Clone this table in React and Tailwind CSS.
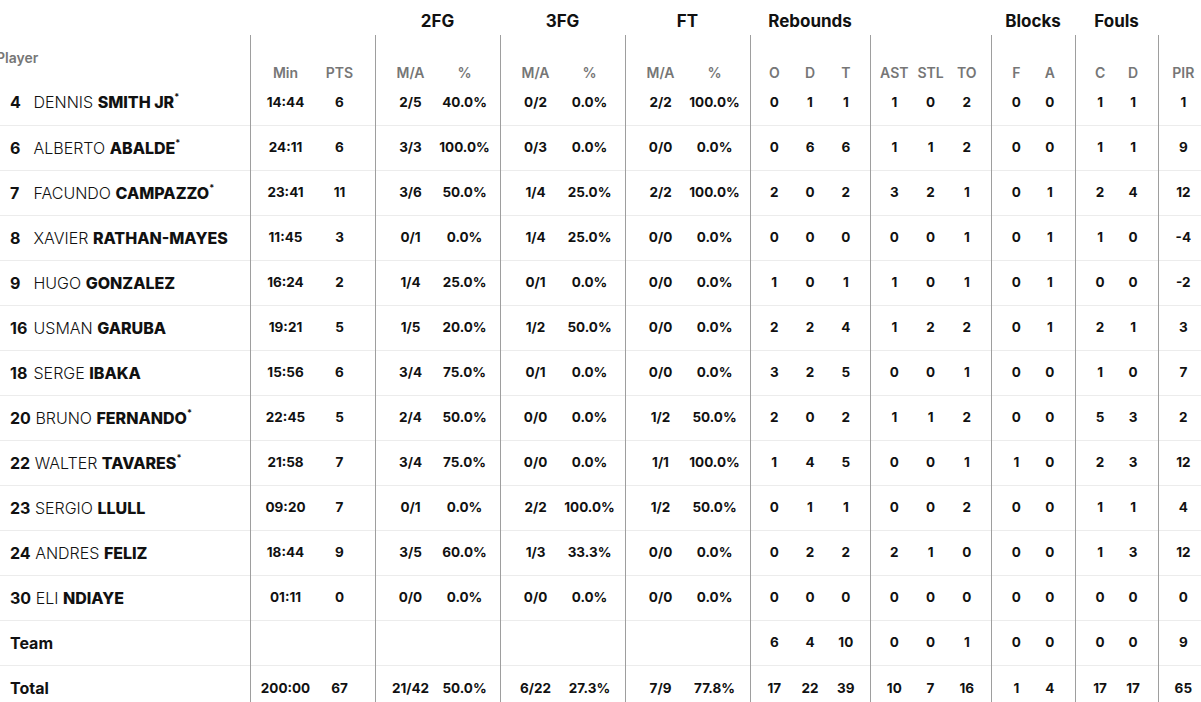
const cols = [
  { w: 'w-[62.5px]', pad: 'pl-2', line: true },
  { w: 'w-[62.5px]', pad: 'pr-2' },
  { w: 'w-[62.5px]', pad: 'pl-2', line: true },
  { w: 'w-[62.5px]', pad: 'pr-2' },
  { w: 'w-[62.5px]', pad: 'pl-2', line: true },
  { w: 'w-[62.5px]', pad: 'pr-2' },
  { w: 'w-[62.5px]', pad: 'pl-2', line: true },
  { w: 'w-[62.5px]', pad: 'pr-2' },
  { w: 'w-[40px]', pad: 'pl-2', line: true },
  { w: 'w-[40px]', pad: '' },
  { w: 'w-[40px]', pad: 'pr-2' },
  { w: 'w-[40px]', pad: 'pl-2', line: true },
  { w: 'w-[41px]', pad: '' },
  { w: 'w-[40px]', pad: 'pr-2' },
  { w: 'w-[42px]', pad: 'pl-2', line: true },
  { w: 'w-[42px]', pad: 'pr-2' },
  { w: 'w-[41.5px]', pad: 'pl-2', line: true },
  { w: 'w-[41.5px]', pad: 'pr-2' },
  { w: 'w-[50px]', pad: '', line: true },
];

const labels = ['Min', 'PTS', 'M/A', '%', 'M/A', '%', 'M/A', '%', 'O', 'D', 'T', 'AST', 'STL', 'TO', 'F', 'A', 'C', 'D', 'PIR'];

const players = [
  ['4', 'DENNIS', 'SMITH JR', true, '14:44 6 2/5 40.0% 0/2 0.0% 2/2 100.0% 0 1 1 1 0 2 0 0 1 1 1'],
  ['6', 'ALBERTO', 'ABALDE', true, '24:11 6 3/3 100.0% 0/3 0.0% 0/0 0.0% 0 6 6 1 1 2 0 0 1 1 9'],
  ['7', 'FACUNDO', 'CAMPAZZO', true, '23:41 11 3/6 50.0% 1/4 25.0% 2/2 100.0% 2 0 2 3 2 1 0 1 2 4 12'],
  ['8', 'XAVIER', 'RATHAN-MAYES', false, '11:45 3 0/1 0.0% 1/4 25.0% 0/0 0.0% 0 0 0 0 0 1 0 1 1 0 -4'],
  ['9', 'HUGO', 'GONZALEZ', false, '16:24 2 1/4 25.0% 0/1 0.0% 0/0 0.0% 1 0 1 1 0 1 0 1 0 0 -2'],
  ['16', 'USMAN', 'GARUBA', false, '19:21 5 1/5 20.0% 1/2 50.0% 0/0 0.0% 2 2 4 1 2 2 0 1 2 1 3'],
  ['18', 'SERGE', 'IBAKA', false, '15:56 6 3/4 75.0% 0/1 0.0% 0/0 0.0% 3 2 5 0 0 1 0 0 1 0 7'],
  ['20', 'BRUNO', 'FERNANDO', true, '22:45 5 2/4 50.0% 0/0 0.0% 1/2 50.0% 2 0 2 1 1 2 0 0 5 3 2'],
  ['22', 'WALTER', 'TAVARES', true, '21:58 7 3/4 75.0% 0/0 0.0% 1/1 100.0% 1 4 5 0 0 1 1 0 2 3 12'],
  ['23', 'SERGIO', 'LLULL', false, '09:20 7 0/1 0.0% 2/2 100.0% 1/2 50.0% 0 1 1 0 0 2 0 0 1 1 4'],
  ['24', 'ANDRES', 'FELIZ', false, '18:44 9 3/5 60.0% 1/3 33.3% 0/0 0.0% 0 2 2 2 1 0 0 0 1 3 12'],
  ['30', 'ELI', 'NDIAYE', false, '01:11 0 0/0 0.0% 0/0 0.0% 0/0 0.0% 0 0 0 0 0 0 0 0 0 0 0'],
];

const team = ['', '', '', '', '', '', '', '', '6', '4', '10', '0', '0', '1', '0', '0', '0', '0', '9'];
const total = '200:00 67 21/42 50.0% 6/22 27.3% 7/9 77.8% 17 22 39 10 7 16 1 4 17 17 65'.split(' ');

const cellClass = (c) =>
  `${c.pad} text-center ${c.line ? 'border-l border-[#9e9e9e]' : ''}`;

const StatCells = ({ values }) =>
  values.map((v, i) => (
    <td key={i} className={`${cellClass(cols[i])} text-[13.5px] font-bold text-[#111]`}>
      {v}
    </td>
  ));

export default function App() {
  return (
    <div className="h-screen w-full overflow-hidden bg-white font-['Inter',sans-serif] text-[#111]">
      <table className="table-fixed border-collapse w-[1208px]">
        <colgroup>
          <col className="w-[250px]" />
          {cols.map((c, i) => (
            <col key={i} className={c.w} />
          ))}
        </colgroup>
        <thead>
          <tr className="h-[35px]">
            <th />
            <th colSpan={2} />
            <th colSpan={2} className="pt-2 text-[17px] font-bold">2FG</th>
            <th colSpan={2} className="pt-2 text-[17px] font-bold">3FG</th>
            <th colSpan={2} className="pt-2 text-[17px] font-bold">FT</th>
            <th colSpan={3} className="pt-2 text-[17px] font-bold">Rebounds</th>
            <th colSpan={3} />
            <th colSpan={2} className="pt-2 text-[17px] font-bold">Blocks</th>
            <th colSpan={2} className="pt-2 text-[17px] font-bold">Fouls</th>
            <th />
          </tr>
          <tr className="h-[45px]">
            <th className="text-left align-middle text-[14px] font-semibold text-[#767676]">
              <span className="-ml-1 inline-block">Player</span>
            </th>
            {labels.map((l, i) => (
              <th
                key={i}
                className={`${cellClass(cols[i])} align-bottom pb-0 text-[14px] leading-none font-semibold text-[#767676]`}
              >
                {l}
              </th>
            ))}
          </tr>
        </thead>
        <tbody>
          {players.map(([num, first, last, starter, stats], r) => (
            <tr key={num} className={`h-[45px] ${r > 0 ? 'border-t border-[#ececec]' : ''}`}>
              <td className="pl-[10px] text-[16px] whitespace-nowrap">
                <span className="inline-block min-w-[19px] font-bold">{num}</span>{' '}
                <span className="font-light">{first}</span>{' '}
                <span className="font-extrabold">{last}</span>
                {starter && (
                  <span className="inline-block align-top pt-[2px] text-[9px] font-bold leading-none">*</span>
                )}
              </td>
              <StatCells values={stats.split(' ')} />
            </tr>
          ))}
          <tr className="h-[45px] border-t border-[#ececec]">
            <td className="pl-[10px] text-[16px] font-bold">Team</td>
            <StatCells values={team} />
          </tr>
          <tr className="h-[45px] border-t border-[#ececec]">
            <td className="pl-[10px] text-[16px] font-bold">Total</td>
            <StatCells values={total} />
          </tr>
        </tbody>
      </table>
    </div>
  );
}
